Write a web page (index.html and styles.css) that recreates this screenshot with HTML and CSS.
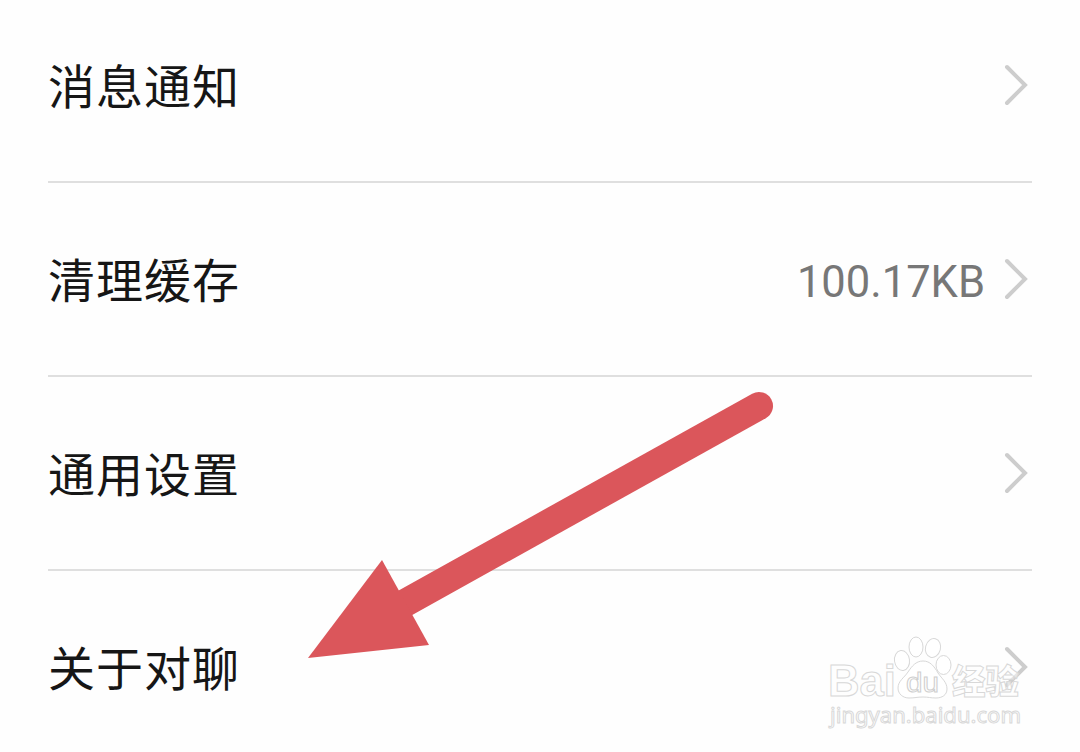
FILE: index.html
```
<!DOCTYPE html>
<html lang="zh-CN">
<head>
    <meta charset="UTF-8">
    <meta name="viewport" content="width=device-width, initial-scale=1.0">
    <title>设置</title>
    <link rel="stylesheet" href="styles.css">
</head>
<body>
    <main class="settings">
        <div class="row">
            <span class="label">消息通知</span>
            <svg class="chevron" viewBox="0 0 26 42"><path d="M3 3 L21 21 L3 39"/></svg>
        </div>
        <div class="row">
            <span class="label">清理缓存</span>
            <span class="value">100.17KB</span>
            <svg class="chevron" viewBox="0 0 26 42"><path d="M3 3 L21 21 L3 39"/></svg>
        </div>
        <div class="row">
            <span class="label">通用设置</span>
            <svg class="chevron" viewBox="0 0 26 42"><path d="M3 3 L21 21 L3 39"/></svg>
        </div>
        <div class="row">
            <span class="label">关于对聊</span>
            <svg class="chevron" viewBox="0 0 26 42"><path d="M3 3 L21 21 L3 39"/></svg>
        </div>
    </main>

    <!-- Arrow pointing at the last row -->
    <svg class="arrow" viewBox="0 0 480 280">
        <path class="arrow-line" d="M459 16 L105 213"/>
        <path class="arrow-head" d="M8 268 L82 170 L129 255 Z"/>
    </svg>

    <!-- Watermark -->
    <svg class="watermark" viewBox="0 0 210 110">
        <text class="mark-name" x="7" y="66" textLength="68" lengthAdjust="spacingAndGlyphs">Bai</text>
        <ellipse cx="81" cy="30.500" rx="7.500" ry="10" transform="rotate(-8 81 30.500)"/>
        <ellipse cx="95" cy="17" rx="7" ry="10"/>
        <ellipse cx="112" cy="18" rx="7.500" ry="9.500" transform="rotate(15 112 18)"/>
        <ellipse cx="122.500" cy="35" rx="7.500" ry="9.500"/>
        <path d="M102 31 C109 31 113 36 117 43 C121 49 126 52 126 59 C126 65 121 68 115 68 C109 68 108 67 102 67 C96 67 94 68 88 68 C82 68 77 64 77 58 C77 51 83 48 87 42 C91 36 95 31 102 31 Z"/>
        <text class="mark-du" x="85" y="62" textLength="33" lengthAdjust="spacingAndGlyphs">du</text>
        <text class="mark-cn" x="131" y="64" textLength="67" lengthAdjust="spacingAndGlyphs">经验</text>
        <text class="mark-url" x="9" y="93" textLength="191" lengthAdjust="spacingAndGlyphs">jingyan.baidu.com</text>
    </svg>
</body>
</html>
```
FILE: styles.css
```
body {
    margin: 0;
    height: 752px;
    overflow: hidden;
    background-color: #fefefe;
    font-family: "Noto Sans CJK SC", sans-serif;
}

.settings {
    margin: -11px 48px 0;
}

.row {
    display: flex;
    align-items: center;
    box-sizing: border-box;
    height: 194px;
    border-bottom: 2px solid #dfdfdf;
}

.row:last-child {
    height: 192px;
    border-bottom: none;
}

.label {
    flex: 1;
    padding-bottom: 3px;
    color: #161616;
    font-size: 47px;
    letter-spacing: 1px;
    line-height: 70px;
}

.value {
    margin-right: 19px;
    padding-top: 8px;
    color: #777;
    font-family: Roboto, sans-serif;
    font-size: 43.5px;
    line-height: 60px;
}

.chevron {
    width: 26px;
    height: 42px;
    margin-right: 2px;
    fill: none;
    stroke: #cdcdcd;
    stroke-width: 4;
    stroke-linecap: round;
}

.arrow {
    position: absolute;
    left: 300px;
    top: 390px;
    width: 480px;
    height: 280px;
}

.arrow-line {
    fill: none;
    stroke: #db565b;
    stroke-width: 28;
    stroke-linecap: round;
}

.arrow-head {
    fill: #db565b;
}

.watermark {
    position: absolute;
    left: 821px;
    top: 630px;
    width: 210px;
    height: 110px;
    fill: rgba(255, 255, 255, 0.5);
    stroke: #d8d8d8;
    stroke-width: 1;
}

.mark-name,
.mark-du {
    font-family: "Liberation Sans", sans-serif;
    font-weight: bold;
}

.mark-name {
    font-size: 44px;
}

.mark-du {
    font-size: 27px;
    font-weight: normal;
    stroke: #cfcfcf;
}

.mark-cn {
    font-size: 34px;
    font-weight: 900;
}

.mark-url {
    font-family: "Noto Sans", sans-serif;
    font-size: 22px;
}
```
